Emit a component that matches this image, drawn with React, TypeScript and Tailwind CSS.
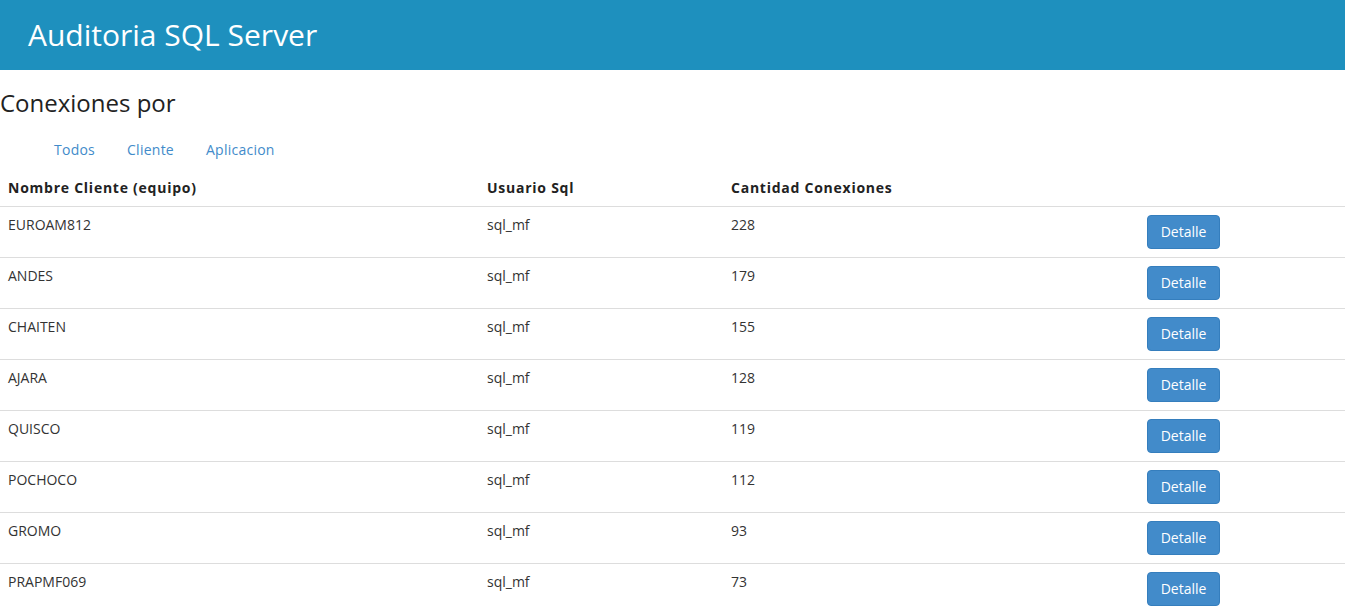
import React from 'react';

const rows = [
  { cliente: 'EUROAM812', usuario: 'sql_mf', cantidad: 228 },
  { cliente: 'ANDES', usuario: 'sql_mf', cantidad: 179 },
  { cliente: 'CHAITEN', usuario: 'sql_mf', cantidad: 155 },
  { cliente: 'AJARA', usuario: 'sql_mf', cantidad: 128 },
  { cliente: 'QUISCO', usuario: 'sql_mf', cantidad: 119 },
  { cliente: 'POCHOCO', usuario: 'sql_mf', cantidad: 112 },
  { cliente: 'GROMO', usuario: 'sql_mf', cantidad: 93 },
  { cliente: 'PRAPMF069', usuario: 'sql_mf', cantidad: 73 },
];

const App: React.FC = () => {
  return (
    <div className="min-h-screen bg-white text-[#333] text-[14px] leading-5" style={{ fontFamily: '"Open Sans", "Noto Sans", sans-serif' }}>
      {/* Top bar */}
      <header className="h-[70px] bg-[#1e90be] flex items-center px-7">
        <h1 className="text-[30px] text-white font-normal leading-none">Auditoria SQL Server</h1>
      </header>

      {/* Title */}
      <h3 className="mt-[20px] mb-[14px] text-[24px] leading-[26px] font-normal text-[#222]">Conexiones por</h3>

      {/* Filter links */}
      <ul className="flex pl-[39px] gap-[2px]">
        {['Todos', 'Cliente', 'Aplicacion'].map((l) => (
          <li key={l}>
            <a className="block px-[15px] py-[10px] text-[#428bca] tracking-[0.25px] cursor-pointer">{l}</a>
          </li>
        ))}
      </ul>

      {/* Table */}
      <table className="w-full border-collapse">
        <thead>
          <tr className="border-b border-[#ddd]">
            <th className="w-[479px] p-2 text-left font-bold tracking-[0.75px] text-[#222]">Nombre Cliente (equipo)</th>
            <th className="w-[244px] p-2 text-left font-bold tracking-[0.75px] text-[#222]">Usuario Sql</th>
            <th className="w-[416px] p-2 text-left font-bold tracking-[0.75px] text-[#222]">Cantidad Conexiones</th>
            <th className="p-2"></th>
          </tr>
        </thead>
        <tbody>
          {rows.map((r) => (
            <tr key={r.cliente} className="border-b border-[#ddd]">
              <td className="p-2 align-top">{r.cliente}</td>
              <td className="p-2 align-top">{r.usuario}</td>
              <td className="p-2 align-top">{r.cantidad}</td>
              <td className="p-2 align-top">
                <button className="w-[73px] py-[6px] rounded bg-[#428bca] border border-[#357ebd] text-white leading-5">
                  Detalle
                </button>
              </td>
            </tr>
          ))}
        </tbody>
      </table>
    </div>
  );
};

export default App;
